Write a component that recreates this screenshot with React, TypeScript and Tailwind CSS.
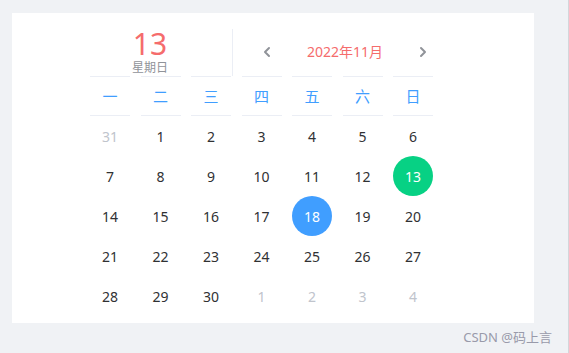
import React from "react";
import { ChevronLeft, ChevronRight } from "lucide-react";

const weekDays = ["一", "二", "三", "四", "五", "六", "日"];

interface Day {
  n: number;
  other?: boolean;
}

const days: Day[] = [
  { n: 31, other: true },
  ...Array.from({ length: 30 }, (_, i) => ({ n: i + 1 })),
  { n: 1, other: true },
  { n: 2, other: true },
  { n: 3, other: true },
  { n: 4, other: true },
];

const today = 13;
const selected = 18;

export default function App() {
  return (
    <div
      className="w-[569px] h-[353px] bg-[#f0f2f5] border-r border-[#d4d6da] relative overflow-hidden"
      style={{ fontFamily: '"Noto Sans", "Noto Sans CJK SC", sans-serif' }}
    >
      <div className="absolute left-[12px] top-[13px] w-[522px] h-[310px] bg-white pl-[78px] pt-[16px]">
        {/* Header */}
        <div className="flex h-[47px]">
          <div className="w-[143px] border-r border-[#ebeef5] flex flex-col items-center pr-[22px] pt-[2px]">
            <span className="text-[30px] leading-[26px] text-[#f56c6c]">13</span>
            <span className="text-[12px] leading-[13px] text-[#909399] mt-[4px]">星期日</span>
          </div>
          <div className="w-[224px] flex items-center justify-between px-[24px] pb-[2px]">
            <button className="w-[20px] flex justify-center text-[#909399]">
              <ChevronLeft size={16} strokeWidth={3} />
            </button>
            <span className="text-[14px] text-[#f56c6c]">2022年11月</span>
            <button className="w-[20px] flex justify-center text-[#909399]">
              <ChevronRight size={16} strokeWidth={3} />
            </button>
          </div>
        </div>

        {/* Week header */}
        <div className="grid grid-cols-7 w-[343px] gap-x-[10.5px]">
          {weekDays.map((w) => (
            <div
              key={w}
              className="h-[40px] border-y border-[#ebeef5] flex items-center justify-center text-[15px] text-[#409eff]"
            >
              {w}
            </div>
          ))}
        </div>

        {/* Days */}
        <div className="grid grid-cols-7 w-[343px] gap-x-[10.5px]">
          {days.map((d, i) => {
            const isToday = !d.other && d.n === today;
            const isSel = !d.other && d.n === selected;
            return (
              <div key={i} className="h-[40px] flex items-center justify-center">
                <span
                  className={
                    "w-[40px] h-[40px] rounded-full flex items-center justify-center text-[14px] " +
                    (isToday
                      ? "bg-[#07d184] text-white"
                      : isSel
                      ? "bg-[#409eff] text-white"
                      : d.other
                      ? "text-[#c0c4cc]"
                      : "text-[#303133]")
                  }
                >
                  {d.n}
                </span>
              </div>
            );
          })}
        </div>
      </div>

      <div className="absolute right-[16px] top-[328px] text-[13px] text-[#999aaa]">CSDN @码上言</div>
    </div>
  );
}
